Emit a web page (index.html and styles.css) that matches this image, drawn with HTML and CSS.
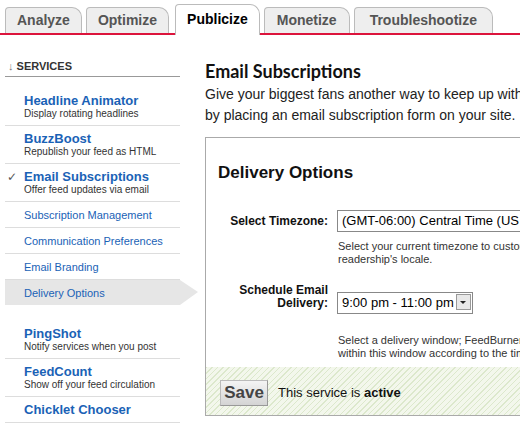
FILE: index.html
```html
<!DOCTYPE html>
<html lang="en">
<head>
  <meta charset="UTF-8">
  <title>FeedBurner - Publicize</title>
  <link rel="stylesheet" href="styles.css">
</head>
<body>

  <div class="tabs">
    <a class="tab">Analyze</a>
    <a class="tab">Optimize</a>
    <a class="tab active">Publicize</a>
    <a class="tab">Monetize</a>
    <a class="tab">Troubleshootize</a>
  </div>

  <div class="page">
    <aside class="sidebar">
      <div class="side-head"><span class="arrow">↓</span> Services</div>
      <ul class="services">
        <li class="service first">
          <a class="service-name">Headline Animator</a>
          <span class="service-desc">Display rotating headlines</span>
        </li>
        <li class="service">
          <a class="service-name">BuzzBoost</a>
          <span class="service-desc">Republish your feed as HTML</span>
        </li>
        <li class="service">
          <a class="service-name checked">Email Subscriptions</a>
          <span class="service-desc">Offer feed updates via email</span>
        </li>
        <li class="sub"><a>Subscription Management</a></li>
        <li class="sub"><a>Communication Preferences</a></li>
        <li class="sub"><a>Email Branding</a></li>
        <li class="sub current"><a>Delivery Options</a></li>
        <li class="service after-sub">
          <a class="service-name">PingShot</a>
          <span class="service-desc">Notify services when you post</span>
        </li>
        <li class="service">
          <a class="service-name">FeedCount</a>
          <span class="service-desc">Show off your feed circulation</span>
        </li>
        <li class="service">
          <a class="service-name">Chicklet Chooser</a>
        </li>
      </ul>
    </aside>

    <main class="content">
      <h1>Email Subscriptions</h1>
      <p class="intro">Give your biggest fans another way to keep up with your feed<br>by placing an email subscription form on your site.</p>

      <div class="box">
        <h2>Delivery Options</h2>

        <div class="form-row">
          <label class="label">Select Timezone:</label>
          <div class="field">
            <div class="select wide">(GMT-06:00) Central Time (US &amp; Canada)</div>
            <p class="help">Select your current timezone to customize delivery for your<br>readership's locale.</p>
          </div>
        </div>

        <div class="form-row second">
          <label class="label">Schedule Email<br>Delivery:</label>
          <div class="field">
            <div class="select short">9:00 pm - 11:00 pm<span class="drop"></span></div>
            <p class="help">Select a delivery window; FeedBurner will send your email<br>within this window according to the timezone above.</p>
          </div>
        </div>

        <div class="save-bar">
          <button class="save">Save</button>
          <span class="status">This service is <b>active</b></span>
        </div>
      </div>
    </main>
  </div>

</body>
</html>
```

FILE: styles.css
```css
body {
  font-family: 'Liberation Sans', Arial, sans-serif;
  margin: 0;
  padding: 0;
  background: #fff;
  color: #222;
  width: 520px;
  height: 428px;
  overflow: hidden;
}

/* top tabs */
.tabs {
  display: flex;
  align-items: flex-end;
  gap: 4px;
  height: 33px;
  padding-left: 5px;
  border-bottom: 2px solid #dc143c;
}

.tab {
  height: 25px;
  line-height: 25px;
  padding: 0 11px;
  background: #eee;
  border: 1px solid #bbb;
  border-bottom: none;
  border-radius: 4px 10px 0 0;
  font-size: 14px;
  font-weight: bold;
  color: #555;
}

.tab:nth-child(4) {
  padding: 0 12px;
}

.tab:last-child {
  padding: 0 15px;
}

.tab.active {
  height: 30px;
  line-height: 28px;
  margin-left: 2px;
  margin-bottom: -2px;
  background: #fff;
  color: #000;
}

/* layout */
.page {
  display: flex;
  width: 760px;
}

.sidebar {
  width: 175px;
  margin-left: 5px;
  padding-top: 24px;
  flex-shrink: 0;
}

.side-head {
  font-size: 11px;
  line-height: 13px;
  font-weight: bold;
  text-transform: uppercase;
  color: #333;
  padding: 1px 0 3px 3px;
  border-bottom: 1px solid #999;
}

.side-head .arrow {
  color: #777;
  font-weight: normal;
}

.services {
  list-style: none;
  margin: 0;
  padding: 0;
}

.service {
  padding: 6px 0 5px 19px;
  border-bottom: 1px solid #ddd;
}

.service.first {
  margin-top: 11px;
}

.service.after-sub {
  margin-top: 16px;
}

.service-name {
  display: block;
  font-size: 13px;
  line-height: 14px;
  font-weight: bold;
  color: #1a62b6;
}

.service-name.checked::before {
  content: "✓";
  display: inline-block;
  width: 17px;
  margin-left: -17px;
  color: #555;
  font-weight: normal;
  font-family: 'DejaVu Sans', sans-serif;
  font-size: 12px;
}

.service-desc {
  display: block;
  font-size: 10px;
  line-height: 12px;
  color: #333;
}

.sub {
  padding: 6px 0 5px 19px;
  font-size: 11px;
  line-height: 14px;
  color: #1a62b6;
  border-bottom: 1px solid #ddd;
}

.sub.current {
  position: relative;
  background: #e6e6e6;
  border-bottom: none;
}

.sub.current::after {
  content: "";
  position: absolute;
  top: 0;
  left: 100%;
  border-top: 12px solid transparent;
  border-bottom: 13px solid transparent;
  border-left: 18px solid #e6e6e6;
}

/* main column */
.content {
  margin-left: 25px;
  width: 560px;
  flex-shrink: 0;
}

h1 {
  font-family: Lato, 'Liberation Sans', sans-serif;
  font-size: 18px;
  font-weight: bold;
  color: #111;
  margin: 25px 0 0;
  line-height: 22px;
}

.intro {
  font-size: 14px;
  line-height: 21px;
  margin: 2px 0 0;
  color: #222;
}

.box {
  margin-top: 11px;
  border: 1px solid #aaa;
  height: 277px;
  display: flex;
  flex-direction: column;
}

h2 {
  font-size: 17px;
  font-weight: bold;
  color: #111;
  margin: 25px 0 0 12px;
  line-height: 20px;
}

.form-row {
  display: grid;
  grid-template-columns: 110px 1fr;
  column-gap: 9px;
  margin: 27px 0 0 12px;
}

.form-row.second {
  margin-top: 18px;
}

.label {
  text-align: right;
  font-size: 12px;
  font-weight: bold;
  color: #111;
  line-height: 13px;
  padding-top: 5px;
}

.form-row.second .label {
  padding-top: 0;
}

.select {
  height: 20px;
  line-height: 20px;
  border: 1px solid #888;
  font-size: 13px;
  padding-left: 4px;
  color: #000;
  white-space: nowrap;
  background: #fff;
}

.select.wide {
  width: 330px;
}

.select.short {
  display: flex;
  width: 130px;
  margin-top: 8px;
  justify-content: space-between;
}

.drop {
  width: 15px;
  height: 16px;
  margin: 1px 1px 0 0;
  background: #e8e8e8;
  border: 1px solid #999;
  box-sizing: border-box;
  position: relative;
}

.drop::after {
  content: "";
  position: absolute;
  left: 3px;
  top: 6px;
  border-left: 3px solid transparent;
  border-right: 3px solid transparent;
  border-top: 3px solid #222;
}

.help {
  font-size: 11px;
  line-height: 13px;
  color: #333;
  margin: 8px 0 0 1px;
  white-space: nowrap;
}

.form-row.second .help {
  margin-top: 20px;
}

.save-bar {
  margin-top: auto;
  height: 48px;
  box-sizing: border-box;
  padding: 3px 0 0 14px;
  display: flex;
  align-items: center;
  gap: 10px;
  background: repeating-linear-gradient(135deg, #dce8cc 0 1px, #f3f7ec 1px 4px);
}

.save {
  height: 26px;
  width: 48px;
  padding: 0;
  font-family: 'Liberation Sans', Arial, sans-serif;
  font-size: 17px;
  font-weight: bold;
  color: #444;
  background: linear-gradient(#f4f4f4, #d4d4d4);
  border: 1px solid #bbb;
  border-right-color: #999;
  border-bottom-color: #999;
}

.status {
  font-size: 13px;
  color: #111;
}
```
